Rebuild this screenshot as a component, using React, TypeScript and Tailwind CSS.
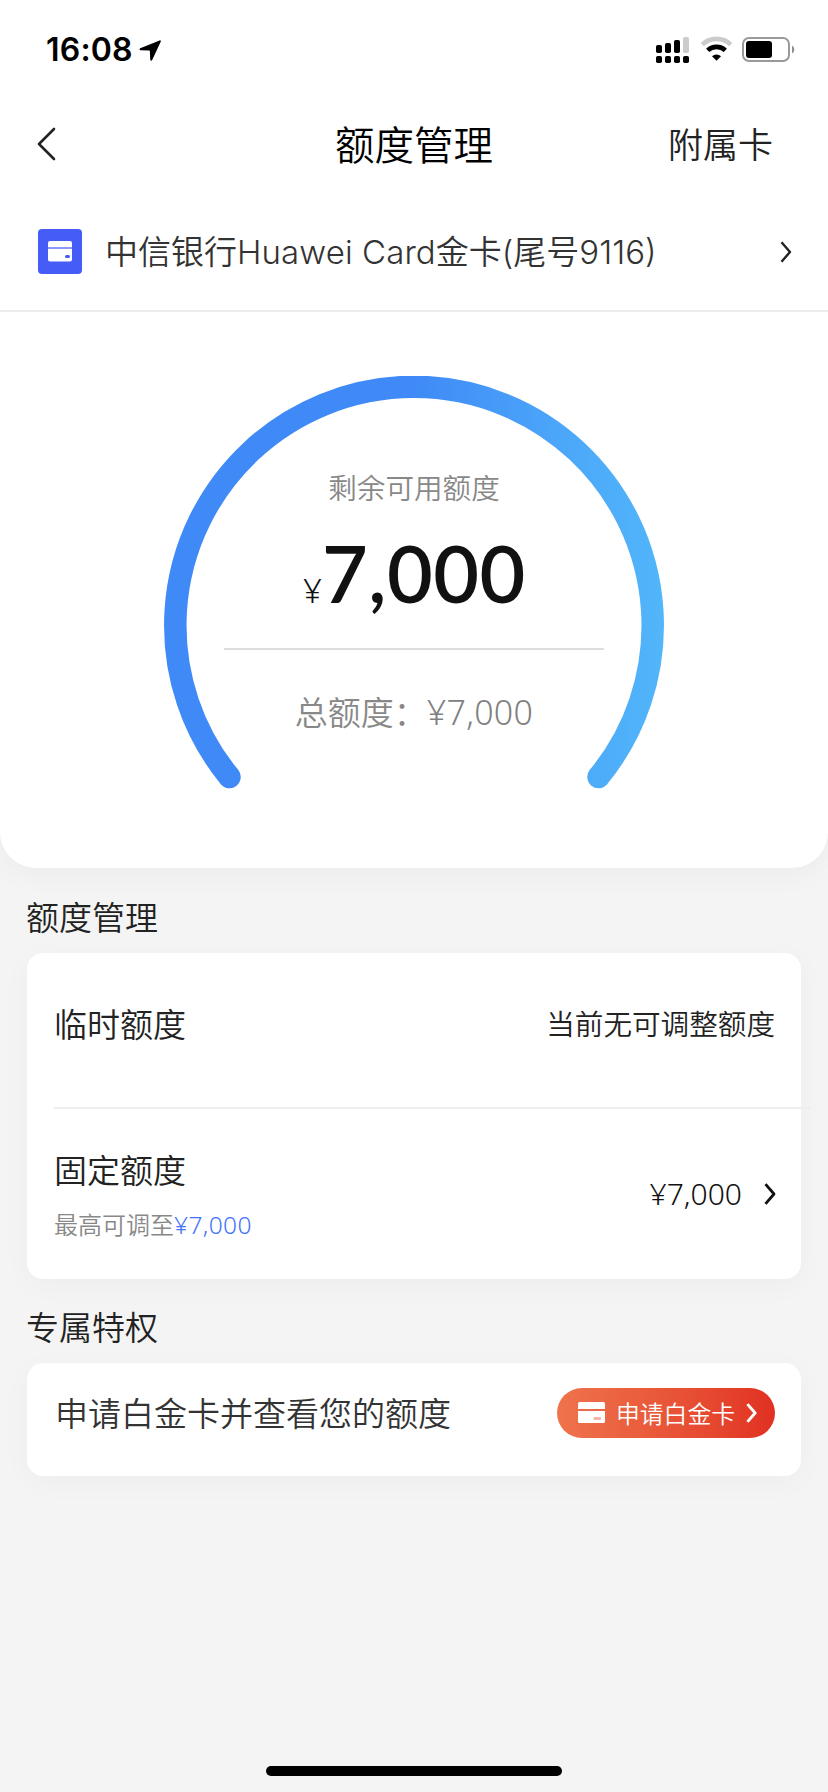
import React from 'react';

const StatusBar: React.FC = () => (
  <div className="flex h-[88px] items-center justify-between pl-[46px] pr-[33px] pt-3">
    <div className="flex items-center gap-[6px]">
      <span className="font-['Inter'] text-[32px] font-semibold leading-[38px] tracking-[0.2px] text-black">16:08</span>
      <svg className="h-[21px] w-[22px]" viewBox="0 0 22 21">
        <path d="M20.6 0.4 1.2 8.2c-1 .5-.8 1.9.4 2l8.6.4c.5 0 .7.3.7.8l.3 8.2c.1 1.2 1.5 1.4 2 .4L21.8 1.6c.4-.8-.4-1.5-1.2-1.2Z" fill="#000" />
      </svg>
    </div>
    <svg className="h-[28px] w-[140px]" viewBox="0 0 140 28">
      <g fill="#000">
        <rect x="1" y="9" width="6" height="8" rx="1.8" />
        <rect x="10" y="7" width="6" height="10" rx="1.8" />
        <rect x="19" y="4" width="6" height="13" rx="1.8" />
        <rect x="28" y="1" width="6" height="16" rx="1.8" fill="#cbcbcb" />
        <rect x="1" y="20" width="6" height="7" rx="1.8" />
        <rect x="10" y="20" width="6" height="7" rx="1.8" />
        <rect x="19" y="20" width="6" height="7" rx="1.8" />
        <rect x="28" y="20" width="6" height="7" rx="1.8" />
      </g>
      <path d="M47.3 8.6a20.5 20.5 0 0 1 28.4 0" fill="none" stroke="#cbcbcb" strokeWidth="4.6" />
      <path d="M52.7 14.4a12.7 12.7 0 0 1 17.6 0" fill="none" stroke="#000" strokeWidth="4.6" />
      <path d="M61.5 24.8 57 20.2a6.6 6.6 0 0 1 9 0Z" fill="#000" />
      <rect x="88" y="2" width="46" height="23" rx="6" fill="none" stroke="#999" strokeWidth="2" />
      <rect x="91" y="5" width="26" height="17" rx="3" fill="#000" />
      <path d="M137 9.5a4.6 4.6 0 0 1 0 8Z" fill="#8e8e8e" />
    </svg>
  </div>
);

interface ChevronProps {
  className: string;
  width?: number;
}

const ChevronRight: React.FC<ChevronProps> = ({ className, width = 2.4 }) => (
  <svg className={className} viewBox="0 0 12 22" fill="none" stroke="currentColor" strokeWidth={width}>
    <path d="M1.5 1.2 10 11 1.5 20.8" strokeLinejoin="round" />
  </svg>
);

const Header: React.FC = () => (
  <div className="grid h-[112px] grid-cols-3 items-center pl-[37px] pr-[55px]">
    <svg className="h-[34px] w-[19px]" viewBox="0 0 19 34" fill="none" stroke="#222" strokeWidth="2.6" strokeLinecap="round" strokeLinejoin="round">
      <path d="M17 2 2 17l15 15" />
    </svg>
    <h1 className="whitespace-nowrap pb-[3px] pl-[18px] text-center text-[39.5px] leading-[56px] text-black">额度管理</h1>
    <span className="pb-[3px] text-right text-[35px] leading-[50px] text-[#222]">附属卡</span>
  </div>
);

const CardRow: React.FC = () => (
  <div className="flex h-[112px] items-center border-b-2 border-[#ececec] pb-[7px] pl-[38px] pr-[36px]">
    <svg className="h-[45px] w-[44px]" viewBox="0 0 44 45">
      <rect width="44" height="45" rx="4" fill="#455df6" />
      <path d="M12 12h20a2 2 0 0 1 2 2v4H10v-4a2 2 0 0 1 2-2Z" fill="#fff" />
      <path d="M10 18h24v2H10Z" fill="#8b9afa" />
      <path d="M10 20h24v10.500a2 2 0 0 1-2 2H12a2 2 0 0 1-2-2Z" fill="#fff" />
      <rect x="27" y="26" width="5" height="3" rx="1.5" fill="#455df6" />
    </svg>
    <span className="ml-[23px] flex-1 whitespace-nowrap font-['Inter','Noto_Sans_CJK_SC',sans-serif] text-[33px] leading-[48px] text-[#333]">
      中信银行<span className="tracking-[0.1px]">Huawei Card</span>金卡(尾号9116)
    </span>
    <ChevronRight className="h-[22px] w-[12px] text-[#222]" />
  </div>
);

const LimitGauge: React.FC = () => (
  <div className="grid h-[556px] justify-center pt-[64px]">
    <svg className="col-start-1 row-start-1 h-[420px] w-[500px]" viewBox="0 0 500 420">
      <defs>
        <linearGradient id="gauge" x1="0" y1="0" x2="500" y2="0" gradientUnits="userSpaceOnUse">
          <stop offset="0" stopColor="#3f8af7" />
          <stop offset="0.5" stopColor="#3f8af7" />
          <stop offset="0.8" stopColor="#4ca7f9" />
          <stop offset="1" stopColor="#51b6fa" />
        </linearGradient>
      </defs>
      <path d="M65.500 401a238.700 238.700 0 1 1 369 0" fill="none" stroke="url(#gauge)" strokeWidth="22.5" strokeLinecap="round" />
    </svg>
    <div className="col-start-1 row-start-1 flex flex-col items-center pt-[91px]">
      <span className="text-[28.6px] leading-[40px] text-[#888]">剩余可用额度</span>
      <div className="mt-[20px] flex items-baseline pl-[1px] text-[#111]">
        <span className="font-['Noto_Sans'] text-[33px] leading-none">¥</span>
        <span className="font-['Lato'] text-[79px] font-semibold leading-[92px] tracking-[0.5px]">7,000</span>
      </div>
      <div className="mt-[29px] h-[2px] w-[380px] bg-[#ddd]" />
      <span className="mt-[37px] text-[33px] leading-[48px] text-[#888]">
        总额度：<span className="font-['Noto_Sans'] text-[34px] tracking-[0.3px] text-[#808080]">¥7,000</span>
      </span>
    </div>
  </div>
);

const LimitCard: React.FC = () => (
  <div className="mx-[27px] mt-[13px] h-[326px] rounded-[16px] bg-white pl-[27px] shadow-[0_6px_30px_rgba(0,0,0,0.03)]">
    <div className="flex h-[154px] items-center justify-between pb-[13px] pr-[26px]">
      <span className="text-[33px] text-[#222]">临时额度</span>
      <span className="text-[28.6px] text-[#222]">当前无可调整额度</span>
    </div>
    <div className="-mr-[10px] h-[2px] bg-[#eee]" />
    <div className="flex h-[170px] items-center justify-between pr-[25px]">
      <div className="flex flex-col gap-[13px] pb-[1px]">
        <span className="text-[33px] leading-[48px] text-[#222]">固定额度</span>
        <span className="text-[24px] leading-[36px] text-[#888]">
          最高可调至<span className="font-['Noto_Sans'] text-[24.5px] tracking-[0.4px] text-[#4373fb]">¥7,000</span>
        </span>
      </div>
      <div className="flex items-center gap-[22px] text-[#111]">
        <span className="pb-[2px] font-['Noto_Sans'] text-[30px]">¥7,000</span>
        <ChevronRight className="h-[22px] w-[12px]" width={2.8} />
      </div>
    </div>
  </div>
);

const PrivilegeCard: React.FC = () => (
  <div className="mx-[27px] mt-[13px] flex h-[113px] items-center justify-between rounded-[16px] bg-white pb-[14px] pl-[28px] pr-[26px] shadow-[0_6px_30px_rgba(0,0,0,0.03)]">
    <span className="text-[33px] text-[#333]">申请白金卡并查看您的额度</span>
    <button className="flex h-[50px] w-[218px] items-center rounded-full bg-linear-to-r from-[#ef734c] to-[#e13022] pl-[21px] text-white">
      <svg className="h-[21px] w-[27px]" viewBox="0 0 27 21">
        <path d="M1.500 0h24A1.500 1.500 0 0 1 27 1.500V7H0V1.500A1.500 1.500 0 0 1 1.500 0ZM0 9h27v10.500a1.500 1.500 0 0 1-1.500 1.500h-24A1.500 1.500 0 0 1 0 19.500Z" fill="#fff" />
        <rect x="15.500" y="15" width="7.500" height="3" rx="1" fill="#f7b5aa" />
      </svg>
      <span className="ml-[11px] text-[23.8px] leading-[36px]">申请白金卡</span>
      <ChevronRight className="ml-[11px] h-[20px] w-[11px]" width={3.2} />
    </button>
  </div>
);

const SectionTitle: React.FC<{ children: React.ReactNode }> = ({ children }) => (
  <h2 className="pl-[26px] text-[33px] leading-[48px] text-[#222]">{children}</h2>
);

const App: React.FC = () => {
  return (
    <div className="flex h-[1792px] w-[828px] flex-col overflow-hidden bg-[#f4f4f4] font-['Noto_Sans_CJK_SC',sans-serif] font-[350]">
      <div className="h-[868px] rounded-b-[36px] bg-white shadow-[0_6px_30px_rgba(0,0,0,0.04)]">
        <StatusBar />
        <Header />
        <CardRow />
        <LimitGauge />
      </div>

      <div className="mt-[24px]">
        <SectionTitle>额度管理</SectionTitle>
        <LimitCard />
      </div>

      <div className="mt-[23px]">
        <SectionTitle>专属特权</SectionTitle>
        <PrivilegeCard />
      </div>

      <div className="mx-auto mb-[16px] mt-auto h-[10px] w-[296px] rounded-full bg-black" />
    </div>
  );
};

export default App;
